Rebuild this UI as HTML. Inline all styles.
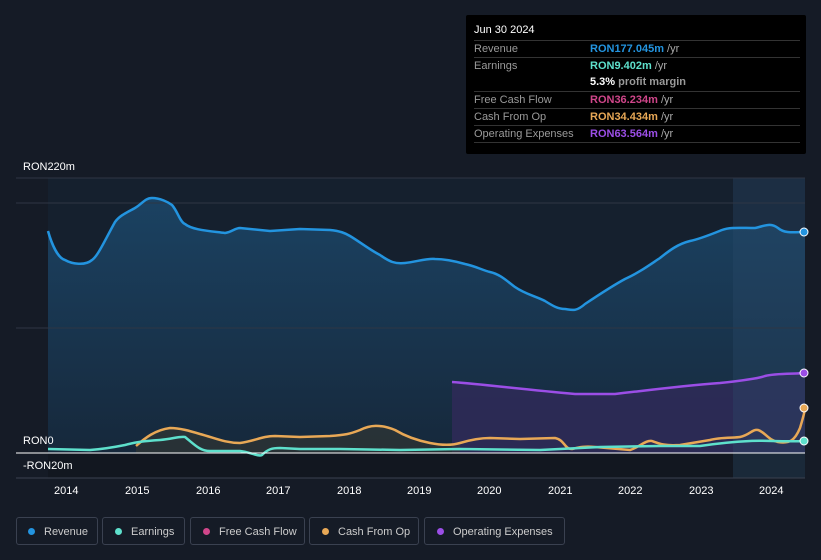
<!DOCTYPE html>
<html><head><style>
body{margin:0;width:821px;height:560px;background:#151b26;font-family:"Liberation Sans",sans-serif;overflow:hidden;position:relative}
.tt{position:absolute;left:466px;top:15px;width:340px;height:139px;background:#000;border-radius:2px}
.tt .h{position:absolute;left:8px;top:9px;color:#fff;font-size:11px}
.row{position:absolute;left:8px;width:326px;height:17px;border-top:1px solid #333;font-size:11px;color:#999}
.row span{position:absolute;left:116px;top:2px;font-weight:bold}
.row .l{position:absolute;left:0;top:2px;color:#9a9a9a}
.yr{color:#aaa;font-weight:normal}
.lg{position:absolute;top:517px;height:28px;border:1px solid #3a4150;border-radius:3px;color:#ccc;font-size:11px;line-height:28px;box-sizing:border-box}
.lg i{display:inline-block;width:7px;height:7px;border-radius:50%;margin:0 9px 0 12px}
.ax{position:absolute;top:485px;color:#fff;font-size:11px}
</style></head><body>
<svg width="821" height="560" style="position:absolute;left:0;top:0">
<defs><linearGradient id="rg" x1="0" y1="0" x2="0" y2="1"><stop offset="0" stop-color="#1b4262"/><stop offset="1" stop-color="#16283b"/></linearGradient></defs>
<rect x="48" y="178" width="757" height="275" fill="#15202e"/>
<rect x="48" y="453" width="757" height="25" fill="#121720"/>
<path d="M48,231 C52,245 58,258 65,260 C72,264 85,266 92,260 C98,256 105,240 115,222 C120,215 128,212 135,208 C142,204 145,198 152,198 C160,198 168,202 172,205 C178,212 180,222 185,224 C192,230 210,231 225,233 C232,232 235,228 240,228 L270,231 L300,229 L330,230 C340,231 345,233 350,236 C360,242 370,250 380,255 C390,262 395,264 405,263 C415,262 428,258 435,259 C445,259 458,262 465,264 C475,266 482,270 490,272 C500,274 508,282 515,287 C525,294 535,296 545,301 C553,306 558,309 565,309 C572,310 576,312 585,304 C600,294 612,286 625,279 C640,272 648,266 660,258 C670,250 678,244 690,241 C700,239 712,234 722,230 C730,227 740,228 755,228 C765,226 770,222 778,228 C785,234 795,232 805,232 L805,453 L48,453 Z" fill="url(#rg)"/>
<path d="M452,382 C480,384 520,389 575,394 L615,394 C650,390 680,386 720,383 C740,381 760,378 765,376 C775,373 795,374 805,373 L805,453 L452,453 Z" fill="#2f2a58" opacity="0.85"/>
<path d="M136,446 C145,438 155,430 170,428 C180,428 190,431 200,434 C215,438 225,443 240,443 C255,441 262,436 275,436 L300,437 L330,436 C345,435 350,434 360,430 C370,425 380,424 395,430 C405,436 415,440 430,443 C440,445 450,446 460,443 L460,453 L136,453 Z" fill="#3a3a30" opacity="0.5"/>
<rect x="733" y="178" width="72" height="300" fill="#2a4a6a" opacity="0.35"/>
<line x1="16" y1="178" x2="805" y2="178" stroke="#2e3644"/>
<line x1="16" y1="203" x2="805" y2="203" stroke="#2e3644"/>
<line x1="16" y1="328" x2="805" y2="328" stroke="#2e3644"/>
<line x1="16" y1="478" x2="805" y2="478" stroke="#3a4150"/>
<path d="M48,231 C52,245 58,258 65,260 C72,264 85,266 92,260 C98,256 105,240 115,222 C120,215 128,212 135,208 C142,204 145,198 152,198 C160,198 168,202 172,205 C178,212 180,222 185,224 C192,230 210,231 225,233 C232,232 235,228 240,228 L270,231 L300,229 L330,230 C340,231 345,233 350,236 C360,242 370,250 380,255 C390,262 395,264 405,263 C415,262 428,258 435,259 C445,259 458,262 465,264 C475,266 482,270 490,272 C500,274 508,282 515,287 C525,294 535,296 545,301 C553,306 558,309 565,309 C572,310 576,312 585,304 C600,294 612,286 625,279 C640,272 648,266 660,258 C670,250 678,244 690,241 C700,239 712,234 722,230 C730,227 740,228 755,228 C765,226 770,222 778,228 C785,234 795,232 805,232" fill="none" stroke="#2394df" stroke-width="2.5"/>
<path d="M452,382 C480,384 520,389 575,394 L615,394 C650,390 680,386 720,383 C740,381 760,378 765,376 C775,373 795,374 805,373" fill="none" stroke="#9b4ee6" stroke-width="2.5"/>
<path d="M136,446 C145,438 155,430 170,428 C180,428 190,431 200,434 C215,438 225,443 240,443 C255,441 262,436 275,436 L300,437 L330,436 C345,435 350,434 360,430 C370,425 380,424 395,430 C405,436 415,440 430,443 C440,445 450,446 460,443 C470,440 480,438 490,438 L520,439 L555,438 C565,440 564,449 572,449 C580,447 585,446 595,447 L630,450 C640,447 645,440 652,441 C660,444 665,446 680,445 L710,440 C720,437 735,438 740,437 C750,435 752,429 758,430 C765,432 768,440 778,442 C790,444 795,440 800,428 C803,418 805,410 805,408" fill="none" stroke="#e8a856" stroke-width="2.5"/>
<path d="M48,449 L90,450 C105,449 115,447 125,445 C135,442 145,441 160,440 C172,439 180,436 185,437 C195,445 200,451 210,451 L240,451 C250,452 258,457 262,455 C268,449 272,448 280,448 L300,449 L340,449 L400,450 L460,449 L540,450 L600,447 L660,446 L700,446 C720,443 730,442 750,441 C765,440 780,442 805,441" fill="none" stroke="#5ee0cc" stroke-width="2.5"/>
<line x1="16" y1="453" x2="805" y2="453" stroke="#fff" stroke-width="1"/>
<circle cx="804" cy="232" r="4" fill="#2394df" stroke="#fff" stroke-width="1"/>
<circle cx="804" cy="373" r="4" fill="#9b4ee6" stroke="#fff" stroke-width="1"/>
<circle cx="804" cy="408" r="4" fill="#e8a856" stroke="#fff" stroke-width="1"/>
<circle cx="804" cy="441" r="4" fill="#5ee0cc" stroke="#fff" stroke-width="1"/>
</svg>
<div style="position:absolute;left:23px;top:161px;color:#fff;font-size:11px">RON220m</div>
<div style="position:absolute;left:23px;top:435px;color:#fff;font-size:11px">RON0</div>
<div style="position:absolute;left:23px;top:460px;color:#fff;font-size:11px">-RON20m</div>
<div class="ax" style="left:54px">2014</div><div class="ax" style="left:125px">2015</div><div class="ax" style="left:196px">2016</div><div class="ax" style="left:266px">2017</div><div class="ax" style="left:337px">2018</div><div class="ax" style="left:407px">2019</div><div class="ax" style="left:477px">2020</div><div class="ax" style="left:548px">2021</div><div class="ax" style="left:618px">2022</div><div class="ax" style="left:689px">2023</div><div class="ax" style="left:759px">2024</div>
<div class="tt">
<div class="h">Jun 30 2024</div>
<div class="row" style="top:25px"><div class="l">Revenue</div><span style="color:#2394df">RON177.045m <b class="yr">/yr</b></span></div>
<div class="row" style="top:42px"><div class="l">Earnings</div><span style="color:#5ee0cc">RON9.402m <b class="yr">/yr</b></span></div>
<div class="row" style="top:59px;border-top:none"><span style="color:#fff">5.3% <b class="yr" style="font-weight:bold;color:#999">profit margin</b></span></div>
<div class="row" style="top:76px"><div class="l">Free Cash Flow</div><span style="color:#d0468a">RON36.234m <b class="yr">/yr</b></span></div>
<div class="row" style="top:93px"><div class="l">Cash From Op</div><span style="color:#e8a856">RON34.434m <b class="yr">/yr</b></span></div>
<div class="row" style="top:110px"><div class="l">Operating Expenses</div><span style="color:#9b4ee6">RON63.564m <b class="yr">/yr</b></span></div>
<div class="row" style="top:127px;height:0"></div>
</div>
<div class="lg" style="left:16px;width:82px"><i style="background:#2394df;margin-left:11px"></i>Revenue</div>
<div class="lg" style="left:102px;width:83px"><i style="background:#5ee0cc"></i>Earnings</div>
<div class="lg" style="left:190px;width:115px"><i style="background:#d0468a"></i>Free Cash Flow</div>
<div class="lg" style="left:309px;width:110px"><i style="background:#e8a856"></i>Cash From Op</div>
<div class="lg" style="left:424px;width:141px"><i style="background:#9b4ee6"></i>Operating Expenses</div>
</body></html>
